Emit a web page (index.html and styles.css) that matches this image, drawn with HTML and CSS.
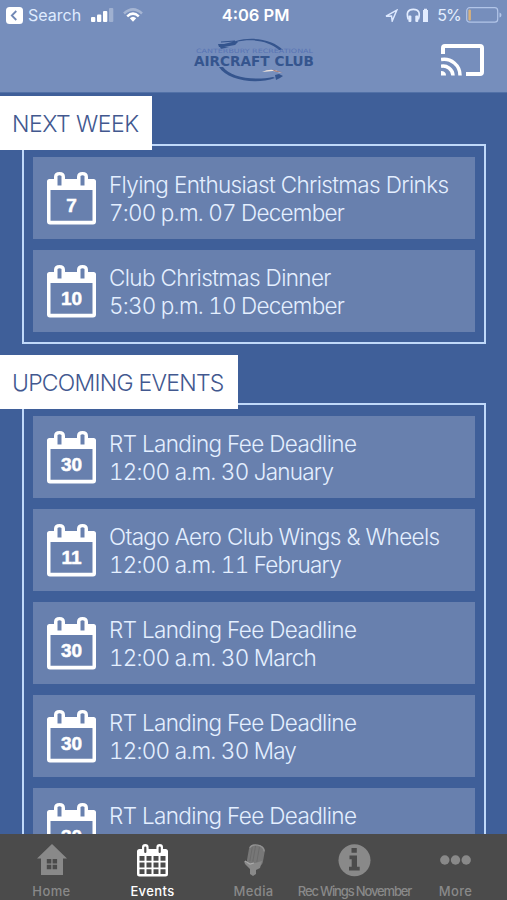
FILE: index.html
```html
<!DOCTYPE html>
<html lang="en">
<head>
    <meta charset="UTF-8" />
    <meta name="viewport" content="width=device-width, initial-scale=1.0" />
    <title>Aircraft Club Events</title>
    <link rel="stylesheet" href="styles.css">
</head>
<body>
    <svg class="symbols">
        <symbol id="calendar" viewBox="0 0 49 53">
            <path fill-rule="evenodd" d="M2.500 7H7V5Q7 0 12.500 0T18 5V7H30V5Q30 0 35.500 0T41 5V7H46.500Q49 7 49 9.500V49.500Q49 52.500 46 52.500H3Q0 52.500 0 49.500V9.500Q0 7 2.500 7ZM3.500 18V48.700H45.500V18ZM10.500 4V13.500H14.500V4Q12.500 2.500 10.500 4ZM33.500 4V13.500H37.500V4Q35.500 2.500 33.500 4Z" />
        </symbol>
    </svg>

    <div class="app">
        <header>
            <div class="status">
                <div class="status-left">
                    <svg width="17" height="17" viewBox="0 0 17 17"><rect width="17" height="17" rx="3.500" fill="#fff" /><path d="M10.300 4 5.800 8.500l4.500 4.500" fill="none" stroke="#7188b5" stroke-width="1.800" /></svg>
                    <span class="back">Search</span>
                    <svg class="signal" width="23" height="14" viewBox="0 0 23 14" fill="#fff"><rect y="9" width="4.300" height="5" rx="1" /><rect x="6" y="6.500" width="4.300" height="7.500" rx="1" /><rect x="12" y="3" width="4.300" height="11" rx="1" /><rect x="18" width="4.300" height="14" rx="1" opacity=".3" /></svg>
                    <svg class="wifi" width="20" height="14" viewBox="0 0 20 14" fill="none" stroke-width="2.500"><path d="M1 5.500Q10-2.800 19 5.500" stroke="#fff" opacity=".35" /><path d="M4.200 8.300Q10 2.900 15.800 8.300" stroke="#fff" /><path d="M6.800 10.300Q10 7.300 13.200 10.300L10 13.700Z" fill="#fff" /></svg>
                </div>
                <div class="time">4:06 PM</div>
                <div class="status-right">
                    <svg width="13" height="13" viewBox="0 0 13 13"><path d="M1 7.200 11.800 1.200 7.200 12 6.500 7Z" fill="none" stroke="#dce8ff" stroke-width="1.500" /></svg>
                    <svg class="headphones" width="23" height="15" viewBox="0 0 23 15"><path d="M2.300 11.500Q-1 1.300 7.300 1.300T12.300 11.500" fill="none" stroke="#e2ecff" stroke-width="1.700" /><rect x="2.400" y="7.500" width="3" height="6.500" rx="1" fill="#e2ecff" /><rect x="9.300" y="7.500" width="3" height="6.500" rx="1" fill="#e2ecff" /><path d="M17 2h1V.8h3V2h1v12h-5Z" fill="#e2ecff" /></svg>
                    <span class="percent">5%</span>
                    <svg width="36" height="16" viewBox="0 0 36 16"><rect x=".7" y=".7" width="31" height="14.500" rx="3" fill="none" stroke="#b2c5e8" stroke-width="1.200" /><rect x="2.400" y="2.500" width="2.500" height="11" rx="1" fill="#d9b27c" /><path d="M33.500 5.500q2 .5 2 2.500t-2 2.500Z" fill="#b2c5e8" /></svg>
                </div>
            </div>
            <div class="brand">
                <svg class="logo" width="122" height="46" viewBox="0 0 122 46">
                    <path d="M43 5C60 0 81 4 90 14L86 14C76 5 59 2 43 6Z" fill="#35558e" />
                    <path d="M26 31C34 44 62 49 82 42L80 41C60 45 37 41 30 31Z" fill="#35558e" />
                    <path d="M25 8 31 8 43 5 45 6 42 9 31 11 26 11ZM28 5.500 42 4.500v1L28 6.500ZM27 11l1 2 8-2" fill="#35558e" />
                    <text x="3" y="17" class="logo-small" textLength="117" lengthAdjust="spacingAndGlyphs">CANTERBURY RECREATIONAL</text>
                    <text x="1" y="30" class="logo-big" textLength="120" lengthAdjust="spacingAndGlyphs">AIRCRAFT CLUB</text>
                    <path d="M69 36q10-5 20 1l-9-2Z" fill="#eee4dc" />
                    <path d="m79 33.500 11 3-8-1Z" fill="#9b6965" />
                    <path d="m82 39 4-1 4 2-3 2-4 2Z" fill="#35558e" />
                </svg>
                <svg class="cast" width="43" height="33" viewBox="0 0 43 33" fill="none" stroke="#fff" stroke-width="4"><path d="M2 10V4Q2 2 4 2H39Q41 2 41 4V28Q41 30 39 30H25" /><path d="M0 15.500A16 16 0 0 1 19 31.500M0 22.300A10 10 0 0 1 12 31.500" stroke-width="3.500" /><path d="M0 27q5 0 5 4.500H0Z" fill="#fff" stroke="none" /></svg>
            </div>
        </header>

        <main>
            <section>
                <h2 class="next">NEXT WEEK</h2>
                <ul>
                    <li>
                        <div class="date"><svg><use href="#calendar" /></svg><b>7</b></div>
                        <div class="details"><h3>Flying Enthusiast Christmas Drinks</h3><p>7:00 p.m. 07 December</p></div>
                    </li>
                    <li>
                        <div class="date"><svg><use href="#calendar" /></svg><b>10</b></div>
                        <div class="details"><h3>Club Christmas Dinner</h3><p>5:30 p.m. 10 December</p></div>
                    </li>
                </ul>
            </section>

            <section>
                <h2 class="upcoming">UPCOMING EVENTS</h2>
                <ul>
                    <li>
                        <div class="date"><svg><use href="#calendar" /></svg><b>30</b></div>
                        <div class="details"><h3>RT Landing Fee Deadline</h3><p>12:00 a.m. 30 January</p></div>
                    </li>
                    <li>
                        <div class="date"><svg><use href="#calendar" /></svg><b>11</b></div>
                        <div class="details"><h3>Otago Aero Club Wings &amp; Wheels</h3><p>12:00 a.m. 11 February</p></div>
                    </li>
                    <li>
                        <div class="date"><svg><use href="#calendar" /></svg><b>30</b></div>
                        <div class="details"><h3>RT Landing Fee Deadline</h3><p>12:00 a.m. 30 March</p></div>
                    </li>
                    <li>
                        <div class="date"><svg><use href="#calendar" /></svg><b>30</b></div>
                        <div class="details"><h3>RT Landing Fee Deadline</h3><p>12:00 a.m. 30 May</p></div>
                    </li>
                    <li>
                        <div class="date"><svg><use href="#calendar" /></svg><b>30</b></div>
                        <div class="details"><h3>RT Landing Fee Deadline</h3></div>
                    </li>
                </ul>
            </section>
        </main>

        <nav>
            <a>
                <svg width="30" height="33" viewBox="0 0 30 33"><path fill-rule="evenodd" d="M15 0 30 14.500H26V31H4V14.500H0ZM9.800 15v4.500h4.500V15Zm5.800 0v4.500h4.500V15ZM9.800 20.700v4.500h4.500v-4.500Zm5.800 0v4.500h4.500v-4.500Z" fill="currentColor" /></svg>
                <span>Home</span>
            </a>
            <a class="active">
                <svg width="31" height="33" viewBox="0 0 31 33"><path d="M2.500 5H5V3.300a3.300 3.300 0 0 1 6.600 0V5h7.800V3.300a3.300 3.300 0 0 1 6.600 0V5h2.500Q31 5 31 7.500V30q0 2.500-2.500 2.500h-26Q0 32.500 0 30V7.500Q0 5 2.500 5Z" fill="currentColor" /><path d="M8.300 3.500V8M22.700 3.500V8" stroke="#4b4b4b" stroke-width="2.200" stroke-linecap="round" /><path d="M2.500 14.300h26M2.500 21h26M2.500 27.700h26" stroke="#4b4b4b" stroke-width="4.800" stroke-dasharray="5 2" /></svg>
                <span>Events</span>
            </a>
            <a>
                <svg width="24" height="33" viewBox="0 0 24 33"><g transform="rotate(10 14 11)"><rect x="6" y="1" width="16" height="21" rx="5" fill="#777" /><path d="M9 4v14M12 2v16M16 2v16" stroke="#696969" stroke-width=".8" /><path d="M6.500 5Q8 1 14 1T21.500 6" fill="none" stroke="#929292" stroke-width="1.200" /></g><path d="M2 17 8 20 13 19 20 17 18 24 14 26V30L11 32 8 30V25L3 20Z" fill="#898989" /><path d="m3 17 5 3 4-1" fill="none" stroke="#aaa" stroke-width="1.200" /></svg>
                <span>Media</span>
            </a>
            <a>
                <svg width="33" height="33" viewBox="0 0 33 33"><circle cx="16.500" cy="16.300" r="16" fill="currentColor" /><path d="M13.500 4h5.300v4.700h-5.300ZM11.500 11.500h7.500v11.300h2.700v3.800H11v-3.800h2.700v-7.500h-2.200Z" fill="#4b4b4b" /></svg>
                <span class="narrow">Rec Wings November</span>
            </a>
            <a>
                <svg width="31" height="33" viewBox="0 0 31 33" fill="currentColor"><circle cx="4.800" cy="16" r="4.700" /><circle cx="15.500" cy="16" r="4.700" /><circle cx="26.200" cy="16" r="4.700" /></svg>
                <span>More</span>
            </a>
        </nav>
    </div>
</body>
</html>
```
FILE: styles.css
```css
body,
h2,
h3,
p,
ul {
  margin: 0;
  padding: 0;
}

* {
  box-sizing: border-box;
}

body {
  font-family: 'Inter', 'Liberation Sans', sans-serif;
  color: #e4efff;
  background-color: #3f5f99;
}

svg {
  display: block;
  flex: none;
}

.symbols {
  display: none;
}

.app {
  height: 900px;
  display: flex;
  flex-direction: column;
  overflow: hidden;
}

header {
  height: 93px;
  flex: none;
  background-color: #768ebc;
  border-bottom: 1px solid #5271a7;
}

.status {
  height: 30px;
  display: grid;
  grid-template-columns: 1fr auto 1fr;
  align-items: center;
  padding: 0 5px 0 6px;
  font-size: 17px;
}

.status-left,
.status-right {
  display: flex;
  align-items: center;
}

.status-right {
  justify-content: flex-end;
}

.back {
  margin-left: 5px;
  font-size: 16px;
  color: #dfebff;
}

.signal {
  margin-left: 10px;
}

.wifi {
  margin-left: 9px;
}

.time {
  padding-left: 3px;
  font-weight: 600;
  font-size: 16.500px;
  color: #fff;
}

.headphones {
  margin: 0 8px 0 8px;
}

.percent {
  margin-right: 5px;
  font-size: 16px;
  letter-spacing: -0.8px;
}

.brand {
  display: grid;
  grid-template-columns: 1fr auto 1fr;
  padding: 5px 23px 0;
}

.logo {
  grid-column: 2;
  margin-top: 1px;
  overflow: visible;
}

.logo-small {
  font: 6px 'DejaVu Sans', sans-serif;
  fill: #5874b4;
}

.logo-big {
  font: bold 14.500px 'DejaVu Sans', sans-serif;
  fill: #35558e;
}

.cast {
  justify-self: end;
  margin-top: 9px;
}

main {
  flex: 1;
  min-height: 0;
  overflow: hidden;
  padding-top: 3px;
}

section {
  margin-bottom: 11px;
}

h2 {
  position: relative;
  height: 54px;
  padding: 1px 12px 0;
  background-color: #fff;
  color: #42588f;
  font-weight: 300;
  font-size: 23px;
  line-height: 54px;
  white-space: nowrap;
}

.next {
  width: 152px;
  letter-spacing: -0.5px;
}

.upcoming {
  width: 238px;
  letter-spacing: -0.75px;
}

ul {
  list-style: none;
  display: flex;
  flex-direction: column;
  gap: 11px;
  margin: -6px 21px 0 22px;
  padding: 11px 9px 10px;
  border: 2px solid #c0d9fa;
}

li {
  height: 82px;
  display: flex;
  padding: 15px 0 0 14px;
  background-color: #6880ae;
}

.date {
  width: 49px;
  height: 53px;
  display: grid;
  color: #fff;
}

.date svg,
.date b {
  grid-area: 1 / 1;
}

.date svg {
  width: 49px;
  height: 53px;
  fill: #fff;
}

.date b {
  padding-top: 20px;
  text-align: center;
  font-family: 'Liberation Sans', sans-serif;
  font-size: 19px;
  line-height: 28px;
  -webkit-text-stroke: 0.5px #fff;
}

.details {
  margin: -1px 0 0 13px;
  white-space: nowrap;
}

h3,
p {
  font-weight: 300;
  font-size: 22.500px;
  line-height: 28px;
  letter-spacing: -0.64px;
}

p {
  font-variant-numeric: tabular-nums;
  letter-spacing: -0.78px;
}

nav {
  height: 66px;
  flex: none;
  display: grid;
  grid-template-columns: repeat(5, 101px);
  padding-left: 1px;
  background-color: #4b4b4b;
  color: #898989;
}

nav a {
  display: flex;
  flex-direction: column;
  align-items: center;
  padding-top: 10px;
  font-size: 13px;
  font-weight: 500;
  letter-spacing: 0.4px;
}

nav span {
  margin-top: 5px;
  line-height: 18px;
  white-space: nowrap;
}

.active {
  color: #fff;
}

.narrow {
  letter-spacing: -1.15px;
}
```
